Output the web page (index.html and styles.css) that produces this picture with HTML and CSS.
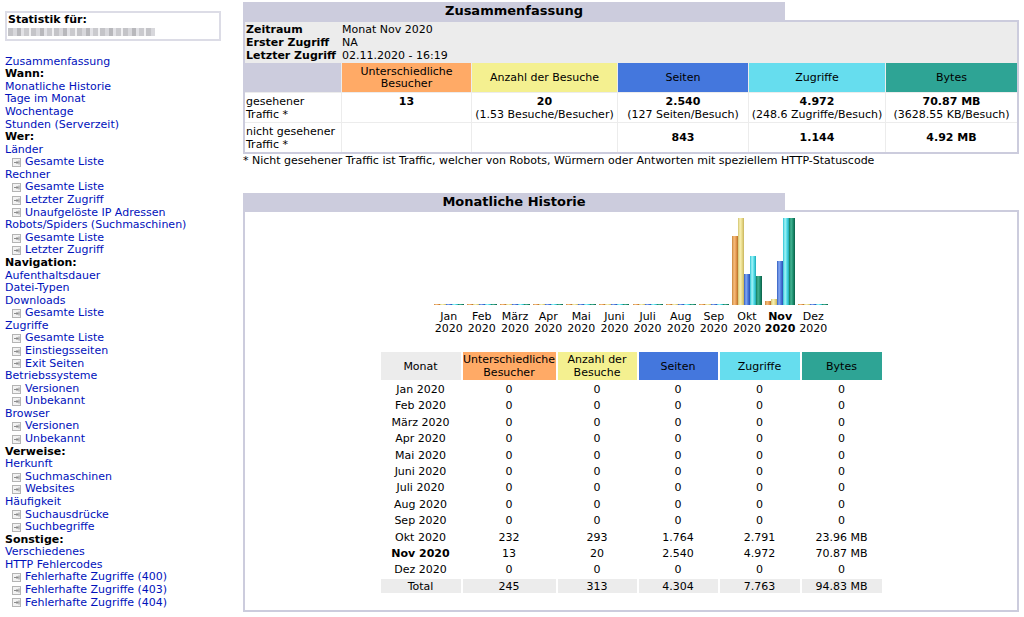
FILE: index.html
```html
<!DOCTYPE html>
<html lang="de">
<head>
<meta charset="utf-8">
<title>Statistik</title>
<link rel="stylesheet" href="styles.css">
</head>
<body>
<div class="page">
  <aside class="sidebar">
    <div class="statbox">
      <b>Statistik für:</b>
      <div class="blur"></div>
    </div>
    <nav class="menu">
      <a>Zusammenfassung</a>
      <div class="h">Wann:</div>
      <a>Monatliche Historie</a>
      <a>Tage im Monat</a>
      <a>Wochentage</a>
      <a>Stunden (Serverzeit)</a>
      <div class="h">Wer:</div>
      <a>Länder</a>
      <a class="sub"><svg viewBox="0 0 9 9"><rect x="0.5" y="0.5" width="8" height="8" fill="#f2f2f2" stroke="#b4b4b4"/><path d="M2 4.5h4M4.5 3l1.5 1.5-1.5 1.5M7 2.5v4" fill="none" stroke="#8c8c8c" stroke-width="1"/></svg>Gesamte Liste</a>
      <a>Rechner</a>
      <a class="sub"><svg viewBox="0 0 9 9"><rect x="0.5" y="0.5" width="8" height="8" fill="#f2f2f2" stroke="#b4b4b4"/><path d="M2 4.5h4M4.5 3l1.5 1.5-1.5 1.5M7 2.5v4" fill="none" stroke="#8c8c8c" stroke-width="1"/></svg>Gesamte Liste</a>
      <a class="sub"><svg viewBox="0 0 9 9"><rect x="0.5" y="0.5" width="8" height="8" fill="#f2f2f2" stroke="#b4b4b4"/><path d="M2 4.5h4M4.5 3l1.5 1.5-1.5 1.5M7 2.5v4" fill="none" stroke="#8c8c8c" stroke-width="1"/></svg>Letzter Zugriff</a>
      <a class="sub"><svg viewBox="0 0 9 9"><rect x="0.5" y="0.5" width="8" height="8" fill="#f2f2f2" stroke="#b4b4b4"/><path d="M2 4.5h4M4.5 3l1.5 1.5-1.5 1.5M7 2.5v4" fill="none" stroke="#8c8c8c" stroke-width="1"/></svg>Unaufgelöste IP Adressen</a>
      <a>Robots/Spiders (Suchmaschinen)</a>
      <a class="sub"><svg viewBox="0 0 9 9"><rect x="0.5" y="0.5" width="8" height="8" fill="#f2f2f2" stroke="#b4b4b4"/><path d="M2 4.5h4M4.5 3l1.5 1.5-1.5 1.5M7 2.5v4" fill="none" stroke="#8c8c8c" stroke-width="1"/></svg>Gesamte Liste</a>
      <a class="sub"><svg viewBox="0 0 9 9"><rect x="0.5" y="0.5" width="8" height="8" fill="#f2f2f2" stroke="#b4b4b4"/><path d="M2 4.5h4M4.5 3l1.5 1.5-1.5 1.5M7 2.5v4" fill="none" stroke="#8c8c8c" stroke-width="1"/></svg>Letzter Zugriff</a>
      <div class="h">Navigation:</div>
      <a>Aufenthaltsdauer</a>
      <a>Datei-Typen</a>
      <a>Downloads</a>
      <a class="sub"><svg viewBox="0 0 9 9"><rect x="0.5" y="0.5" width="8" height="8" fill="#f2f2f2" stroke="#b4b4b4"/><path d="M2 4.5h4M4.5 3l1.5 1.5-1.5 1.5M7 2.5v4" fill="none" stroke="#8c8c8c" stroke-width="1"/></svg>Gesamte Liste</a>
      <a>Zugriffe</a>
      <a class="sub"><svg viewBox="0 0 9 9"><rect x="0.5" y="0.5" width="8" height="8" fill="#f2f2f2" stroke="#b4b4b4"/><path d="M2 4.5h4M4.5 3l1.5 1.5-1.5 1.5M7 2.5v4" fill="none" stroke="#8c8c8c" stroke-width="1"/></svg>Gesamte Liste</a>
      <a class="sub"><svg viewBox="0 0 9 9"><rect x="0.5" y="0.5" width="8" height="8" fill="#f2f2f2" stroke="#b4b4b4"/><path d="M2 4.5h4M4.5 3l1.5 1.5-1.5 1.5M7 2.5v4" fill="none" stroke="#8c8c8c" stroke-width="1"/></svg>Einstiegsseiten</a>
      <a class="sub"><svg viewBox="0 0 9 9"><rect x="0.5" y="0.5" width="8" height="8" fill="#f2f2f2" stroke="#b4b4b4"/><path d="M2 4.5h4M4.5 3l1.5 1.5-1.5 1.5M7 2.5v4" fill="none" stroke="#8c8c8c" stroke-width="1"/></svg>Exit Seiten</a>
      <a>Betriebssysteme</a>
      <a class="sub"><svg viewBox="0 0 9 9"><rect x="0.5" y="0.5" width="8" height="8" fill="#f2f2f2" stroke="#b4b4b4"/><path d="M2 4.5h4M4.5 3l1.5 1.5-1.5 1.5M7 2.5v4" fill="none" stroke="#8c8c8c" stroke-width="1"/></svg>Versionen</a>
      <a class="sub"><svg viewBox="0 0 9 9"><rect x="0.5" y="0.5" width="8" height="8" fill="#f2f2f2" stroke="#b4b4b4"/><path d="M2 4.5h4M4.5 3l1.5 1.5-1.5 1.5M7 2.5v4" fill="none" stroke="#8c8c8c" stroke-width="1"/></svg>Unbekannt</a>
      <a>Browser</a>
      <a class="sub"><svg viewBox="0 0 9 9"><rect x="0.5" y="0.5" width="8" height="8" fill="#f2f2f2" stroke="#b4b4b4"/><path d="M2 4.5h4M4.5 3l1.5 1.5-1.5 1.5M7 2.5v4" fill="none" stroke="#8c8c8c" stroke-width="1"/></svg>Versionen</a>
      <a class="sub"><svg viewBox="0 0 9 9"><rect x="0.5" y="0.5" width="8" height="8" fill="#f2f2f2" stroke="#b4b4b4"/><path d="M2 4.5h4M4.5 3l1.5 1.5-1.5 1.5M7 2.5v4" fill="none" stroke="#8c8c8c" stroke-width="1"/></svg>Unbekannt</a>
      <div class="h">Verweise:</div>
      <a>Herkunft</a>
      <a class="sub"><svg viewBox="0 0 9 9"><rect x="0.5" y="0.5" width="8" height="8" fill="#f2f2f2" stroke="#b4b4b4"/><path d="M2 4.5h4M4.5 3l1.5 1.5-1.5 1.5M7 2.5v4" fill="none" stroke="#8c8c8c" stroke-width="1"/></svg>Suchmaschinen</a>
      <a class="sub"><svg viewBox="0 0 9 9"><rect x="0.5" y="0.5" width="8" height="8" fill="#f2f2f2" stroke="#b4b4b4"/><path d="M2 4.5h4M4.5 3l1.5 1.5-1.5 1.5M7 2.5v4" fill="none" stroke="#8c8c8c" stroke-width="1"/></svg>Websites</a>
      <a>Häufigkeit</a>
      <a class="sub"><svg viewBox="0 0 9 9"><rect x="0.5" y="0.5" width="8" height="8" fill="#f2f2f2" stroke="#b4b4b4"/><path d="M2 4.5h4M4.5 3l1.5 1.5-1.5 1.5M7 2.5v4" fill="none" stroke="#8c8c8c" stroke-width="1"/></svg>Suchausdrücke</a>
      <a class="sub"><svg viewBox="0 0 9 9"><rect x="0.5" y="0.5" width="8" height="8" fill="#f2f2f2" stroke="#b4b4b4"/><path d="M2 4.5h4M4.5 3l1.5 1.5-1.5 1.5M7 2.5v4" fill="none" stroke="#8c8c8c" stroke-width="1"/></svg>Suchbegriffe</a>
      <div class="h">Sonstige:</div>
      <a>Verschiedenes</a>
      <a>HTTP Fehlercodes</a>
      <a class="sub"><svg viewBox="0 0 9 9"><rect x="0.5" y="0.5" width="8" height="8" fill="#f2f2f2" stroke="#b4b4b4"/><path d="M2 4.5h4M4.5 3l1.5 1.5-1.5 1.5M7 2.5v4" fill="none" stroke="#8c8c8c" stroke-width="1"/></svg>Fehlerhafte Zugriffe (400)</a>
      <a class="sub"><svg viewBox="0 0 9 9"><rect x="0.5" y="0.5" width="8" height="8" fill="#f2f2f2" stroke="#b4b4b4"/><path d="M2 4.5h4M4.5 3l1.5 1.5-1.5 1.5M7 2.5v4" fill="none" stroke="#8c8c8c" stroke-width="1"/></svg>Fehlerhafte Zugriffe (403)</a>
      <a class="sub"><svg viewBox="0 0 9 9"><rect x="0.5" y="0.5" width="8" height="8" fill="#f2f2f2" stroke="#b4b4b4"/><path d="M2 4.5h4M4.5 3l1.5 1.5-1.5 1.5M7 2.5v4" fill="none" stroke="#8c8c8c" stroke-width="1"/></svg>Fehlerhafte Zugriffe (404)</a>
    </nav>
  </aside>

  <main class="main">
    <div class="tab">Zusammenfassung</div>
    <div class="box">
      <div class="sum">
        <div class="info">
          <b>Zeitraum</b><span>Monat Nov 2020</span>
          <b>Erster Zugriff</b><span>NA</span>
          <b>Letzter Zugriff</b><span>02.11.2020 - 16:19</span>
        </div>
        <div class="hd blank"></div>
        <div class="hd cu">Unterschiedliche<br>Besucher</div>
        <div class="hd cv">Anzahl der Besuche</div>
        <div class="hd cp">Seiten</div>
        <div class="hd ch">Zugriffe</div>
        <div class="hd ck">Bytes</div>

        <div class="cell lbl">gesehener<br>Traffic *</div>
        <div class="cell"><b>13</b><span>&nbsp;</span></div>
        <div class="cell"><b>20</b><span>(1.53 Besuche/Besucher)</span></div>
        <div class="cell"><b>2.540</b><span>(127 Seiten/Besuch)</span></div>
        <div class="cell"><b>4.972</b><span>(248.6 Zugriffe/Besuch)</span></div>
        <div class="cell"><b>70.87 MB</b><span>(3628.55 KB/Besuch)</span></div>

        <div class="cell lbl">nicht gesehener<br>Traffic *</div>
        <div class="cell"></div>
        <div class="cell"></div>
        <div class="cell"><b>843</b></div>
        <div class="cell"><b>1.144</b></div>
        <div class="cell"><b>4.92 MB</b></div>
      </div>
    </div>
    <p class="note">* Nicht gesehener Traffic ist Traffic, welcher von Robots, Würmern oder Antworten mit speziellem HTTP-Statuscode</p>

    <div class="tab tab2">Monatliche Historie</div>
    <div class="box hbox">
      <div class="chart">
        <div class="mcol"><div class="bars"><i class="bar u" style="height:1px"></i><i class="bar v" style="height:1px"></i><i class="bar p" style="height:1px"></i><i class="bar h" style="height:1px"></i><i class="bar k" style="height:1px"></i></div><div class="mlabel">Jan<br>2020</div></div>
        <div class="mcol"><div class="bars"><i class="bar u" style="height:1px"></i><i class="bar v" style="height:1px"></i><i class="bar p" style="height:1px"></i><i class="bar h" style="height:1px"></i><i class="bar k" style="height:1px"></i></div><div class="mlabel">Feb<br>2020</div></div>
        <div class="mcol"><div class="bars"><i class="bar u" style="height:1px"></i><i class="bar v" style="height:1px"></i><i class="bar p" style="height:1px"></i><i class="bar h" style="height:1px"></i><i class="bar k" style="height:1px"></i></div><div class="mlabel">März<br>2020</div></div>
        <div class="mcol"><div class="bars"><i class="bar u" style="height:1px"></i><i class="bar v" style="height:1px"></i><i class="bar p" style="height:1px"></i><i class="bar h" style="height:1px"></i><i class="bar k" style="height:1px"></i></div><div class="mlabel">Apr<br>2020</div></div>
        <div class="mcol"><div class="bars"><i class="bar u" style="height:1px"></i><i class="bar v" style="height:1px"></i><i class="bar p" style="height:1px"></i><i class="bar h" style="height:1px"></i><i class="bar k" style="height:1px"></i></div><div class="mlabel">Mai<br>2020</div></div>
        <div class="mcol"><div class="bars"><i class="bar u" style="height:1px"></i><i class="bar v" style="height:1px"></i><i class="bar p" style="height:1px"></i><i class="bar h" style="height:1px"></i><i class="bar k" style="height:1px"></i></div><div class="mlabel">Juni<br>2020</div></div>
        <div class="mcol"><div class="bars"><i class="bar u" style="height:1px"></i><i class="bar v" style="height:1px"></i><i class="bar p" style="height:1px"></i><i class="bar h" style="height:1px"></i><i class="bar k" style="height:1px"></i></div><div class="mlabel">Juli<br>2020</div></div>
        <div class="mcol"><div class="bars"><i class="bar u" style="height:1px"></i><i class="bar v" style="height:1px"></i><i class="bar p" style="height:1px"></i><i class="bar h" style="height:1px"></i><i class="bar k" style="height:1px"></i></div><div class="mlabel">Aug<br>2020</div></div>
        <div class="mcol"><div class="bars"><i class="bar u" style="height:1px"></i><i class="bar v" style="height:1px"></i><i class="bar p" style="height:1px"></i><i class="bar h" style="height:1px"></i><i class="bar k" style="height:1px"></i></div><div class="mlabel">Sep<br>2020</div></div>
        <div class="mcol"><div class="bars"><i class="bar u" style="height:69px"></i><i class="bar v" style="height:87px"></i><i class="bar p" style="height:31px"></i><i class="bar h" style="height:49px"></i><i class="bar k" style="height:29px"></i></div><div class="mlabel">Okt<br>2020</div></div>
        <div class="mcol"><div class="bars"><i class="bar u" style="height:4px"></i><i class="bar v" style="height:6px"></i><i class="bar p" style="height:44px"></i><i class="bar h" style="height:87px"></i><i class="bar k" style="height:87px"></i></div><div class="mlabel cur">Nov<br>2020</div></div>
        <div class="mcol"><div class="bars"><i class="bar u" style="height:1px"></i><i class="bar v" style="height:1px"></i><i class="bar p" style="height:1px"></i><i class="bar h" style="height:1px"></i><i class="bar k" style="height:1px"></i></div><div class="mlabel">Dez<br>2020</div></div>
      </div>

      <div class="mtable">
        <div class="th tm">Monat</div>
        <div class="th cu">Unterschiedliche<br>Besucher</div>
        <div class="th cv">Anzahl der<br>Besuche</div>
        <div class="th cp">Seiten</div>
        <div class="th ch">Zugriffe</div>
        <div class="th ck">Bytes</div>

        <div class="td">Jan 2020</div><div class="td">0</div><div class="td">0</div><div class="td">0</div><div class="td">0</div><div class="td">0</div>
        <div class="td">Feb 2020</div><div class="td">0</div><div class="td">0</div><div class="td">0</div><div class="td">0</div><div class="td">0</div>
        <div class="td">März 2020</div><div class="td">0</div><div class="td">0</div><div class="td">0</div><div class="td">0</div><div class="td">0</div>
        <div class="td">Apr 2020</div><div class="td">0</div><div class="td">0</div><div class="td">0</div><div class="td">0</div><div class="td">0</div>
        <div class="td">Mai 2020</div><div class="td">0</div><div class="td">0</div><div class="td">0</div><div class="td">0</div><div class="td">0</div>
        <div class="td">Juni 2020</div><div class="td">0</div><div class="td">0</div><div class="td">0</div><div class="td">0</div><div class="td">0</div>
        <div class="td">Juli 2020</div><div class="td">0</div><div class="td">0</div><div class="td">0</div><div class="td">0</div><div class="td">0</div>
        <div class="td">Aug 2020</div><div class="td">0</div><div class="td">0</div><div class="td">0</div><div class="td">0</div><div class="td">0</div>
        <div class="td">Sep 2020</div><div class="td">0</div><div class="td">0</div><div class="td">0</div><div class="td">0</div><div class="td">0</div>
        <div class="td">Okt 2020</div><div class="td">232</div><div class="td">293</div><div class="td">1.764</div><div class="td">2.791</div><div class="td">23.96 MB</div>
        <div class="td"><b>Nov 2020</b></div><div class="td">13</div><div class="td">20</div><div class="td">2.540</div><div class="td">4.972</div><div class="td">70.87 MB</div>
        <div class="td">Dez 2020</div><div class="td">0</div><div class="td">0</div><div class="td">0</div><div class="td">0</div><div class="td">0</div>
        <div class="td tot">Total</div><div class="td tot">245</div><div class="td tot">313</div><div class="td tot">4.304</div><div class="td tot">7.763</div><div class="td tot">94.83 MB</div>
      </div>
    </div>
  </main>
</div>
</body>
</html>
```

FILE: styles.css
```css
* { box-sizing: border-box; }

body {
  margin: 0;
  font-family: "DejaVu Sans", Verdana, sans-serif;
  font-size: 11px;
  color: #000;
  background: #fff;
}

.page {
  display: flex;
  align-items: flex-start;
}

/* Sidebar */
.sidebar {
  width: 243px;
  flex: none;
  padding: 11px 0 0 5px;
}

.statbox {
  width: 216px;
  height: 30px;
  border: 2px solid #dcdce6;
  padding-left: 1px;
  line-height: 13px;
}

.blur {
  width: 147px;
  height: 8px;
  margin-top: 2px;
  background:
    repeating-linear-gradient(90deg,
      #c4c4c8 0 5px, #d8d8dc 5px 9px, #b8b8bc 9px 13px,
      #e2e2e6 13px 16px, #cacace 16px 21px, #f0f0f2 21px 23px);
  filter: blur(0.5px);
}

.menu {
  margin-top: 14.7px;
  line-height: 12.58px;
}

.menu a {
  display: block;
  color: #0011bb;
  text-decoration: none;
  white-space: nowrap;
}

.menu .h {
  font-weight: bold;
}

.menu a.sub {
  display: flex;
  align-items: center;
  padding-left: 7px;
}

.menu a.sub svg {
  width: 9px;
  height: 9px;
  margin-right: 4px;
  flex: none;
}

/* Main */
.main {
  width: 776px;
  flex: none;
  padding-top: 2px;
}

.tab {
  width: 542px;
  height: 18px;
  background: #ccccdd;
  font-weight: bold;
  font-size: 13px;
  line-height: 18px;
  text-align: center;
}

.tab2 {
  margin-top: 26px;
  height: 17px;
  line-height: 17px;
}

.box {
  border: 2px solid #ccccdd;
  background: #fff;
}

/* Summary */
.sum {
  display: grid;
  grid-template-columns: 96px 129px 145px 130px 136px 1fr;
  gap: 1px;
  background: #ececec;
}

.info {
  grid-column: 1 / -1;
  display: grid;
  grid-template-columns: 96px 1fr;
  padding: 1px 0 0 1px;
  line-height: 13px;
  background: #ececec;
}

.hd {
  height: 29px;
  display: flex;
  align-items: center;
  justify-content: center;
  text-align: center;
  line-height: 12px;
}

.blank { background: #ccccdd; }
.cu { background: #ffaa66; }
.cv { background: #f4f090; }
.cp { background: #4477dd; }
.ch { background: #66ddee; }
.ck { background: #2ea495; }

.cell {
  height: 29px;
  background: #fff;
  display: flex;
  flex-direction: column;
  justify-content: center;
  align-items: center;
  line-height: 13px;
  white-space: nowrap;
}

.cell.lbl {
  align-items: flex-start;
  padding-left: 1px;
}

.note {
  margin: 0;
  line-height: 13px;
}

/* History */
.hbox {
  height: 402px;
  padding-top: 6px;
}

.chart {
  display: flex;
  justify-content: center;
}

.mcol {
  width: 33.15px;
  display: flex;
  flex-direction: column;
  align-items: center;
}

.bars {
  height: 87px;
  display: flex;
  align-items: flex-end;
}

.bar {
  display: block;
  width: 6px;
}

.bar.u { background: linear-gradient(90deg, #c8853c 0, #f6bd7c 35%, #eba058 65%, #b56e26 100%); }
.bar.v { background: linear-gradient(90deg, #d2c470 0, #f8f0b4 35%, #eadc8c 65%, #c8b45c 100%); }
.bar.p { background: linear-gradient(90deg, #2f5cc0 0, #88aaf2 35%, #4c7ae0 65%, #2a50b0 100%); }
.bar.h { background: linear-gradient(90deg, #2cc4d4 0, #a6f4f8 35%, #52dee8 65%, #1ea6b6 100%); }
.bar.k { background: linear-gradient(90deg, #0e7c5c 0, #46b494 35%, #1f9272 65%, #0a5e46 100%); }

.mlabel {
  margin-top: 6px;
  line-height: 12px;
  text-align: center;
  white-space: nowrap;
}

.mlabel.cur { font-weight: bold; }

.mtable {
  display: grid;
  grid-template-columns: 80px 93px 79px 79px 80px 80px;
  gap: 2px;
  width: max-content;
  margin: 17px auto 0;
}

.th {
  height: 28px;
  display: flex;
  align-items: center;
  justify-content: center;
  text-align: center;
  line-height: 13px;
  white-space: nowrap;
}

.tm { background: #ececec; }

.td {
  height: 14.4px;
  line-height: 15.4px;
  text-align: center;
  white-space: nowrap;
}

.td.tot { background: #ececec; }
```
